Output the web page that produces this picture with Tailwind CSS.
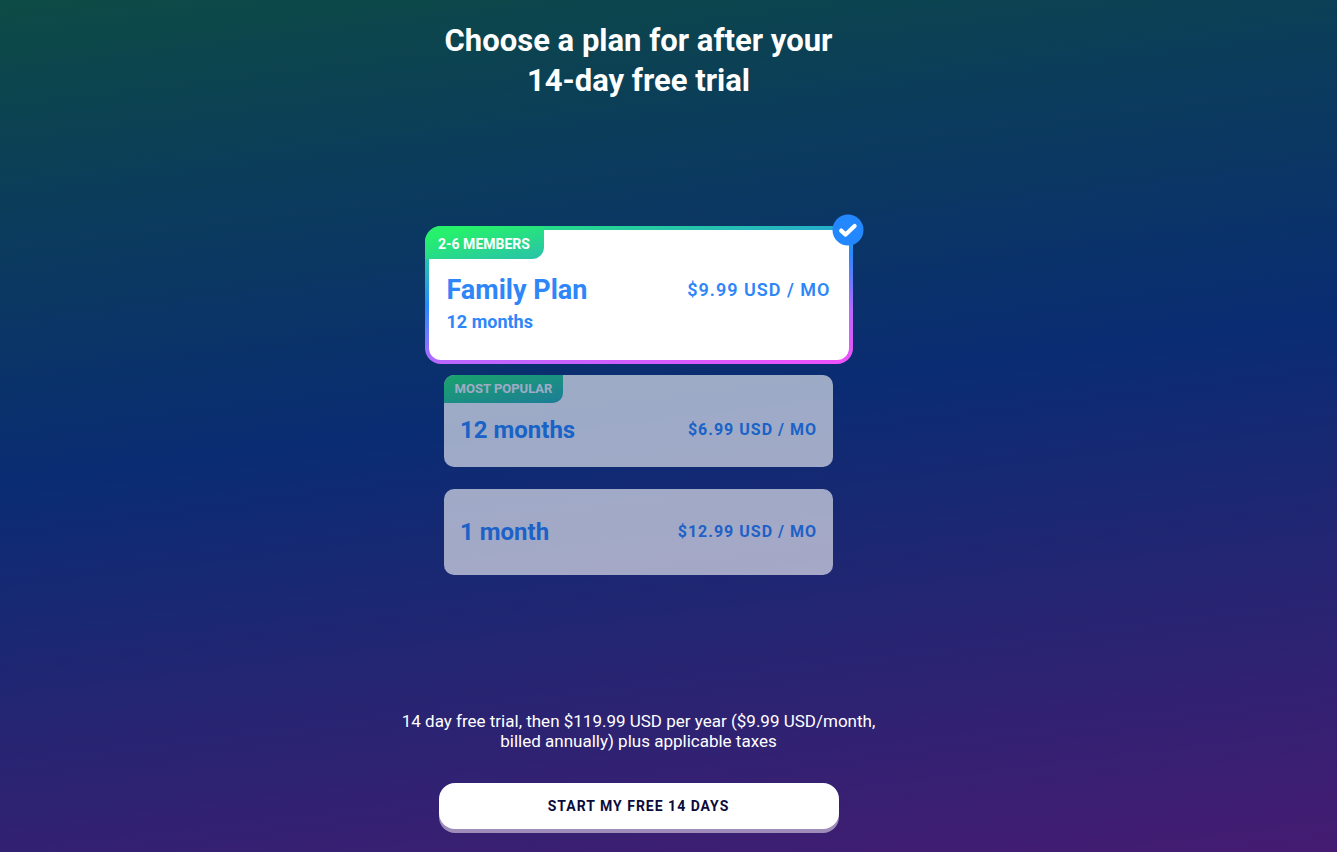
<!DOCTYPE html>
<html lang="en">
<head>
<meta charset="utf-8">
<meta name="viewport" content="width=device-width, initial-scale=1">
<title>Choose a plan</title>
<script src="https://cdn.jsdelivr.net/npm/@tailwindcss/browser@4"></script>
</head>
<body class="min-h-screen bg-[linear-gradient(173deg,#0d4b45_0%,#0b3d5a_20%,#0a2c73_48%,#451c72_100%)] font-['Roboto',sans-serif] text-white">
<form class="flex min-h-screen flex-col items-center px-4 pt-[21px] pb-[23px] md:pr-[60px] md:pl-0">
  <h1 class="max-w-[420px] text-center text-[31px] leading-10 font-bold">Choose a plan for after your<br>14-day free trial</h1>

  <div role="radiogroup" aria-label="Plan" class="mt-[125px] flex w-full max-w-[428px] flex-col items-center">
    <label class="relative w-full cursor-pointer rounded-2xl bg-[linear-gradient(173deg,#26f06c_0%,#2689ff_42%,#b868ff_72%,#f050fa_100%)] p-1">
      <input type="radio" name="plan" value="family" checked class="sr-only">
      <span class="flex h-[130px] items-start justify-between rounded-xl bg-white px-[18px] pt-11 text-[#2e86f8]">
        <span class="flex flex-col">
          <span class="text-[27px] leading-8 font-bold">Family Plan</span>
          <span class="text-lg leading-8 font-bold">12 months</span>
        </span>
        <span class="text-lg leading-8 font-semibold tracking-[1px]">$9.99 USD / MO</span>
      </span>
      <span class="absolute top-0 left-0 flex h-[33px] w-[119px] items-center justify-center rounded-tl-2xl rounded-br-xl bg-[linear-gradient(168deg,#26f06c_20%,#29c1ab_100%)] pt-[3px] text-sm font-bold">2-6 MEMBERS</span>
      <svg class="absolute -top-3 -right-[11px] size-8" viewBox="0 0 32 32" fill="none" aria-hidden="true">
        <circle cx="16" cy="16" r="15.5" fill="#2388ff"/>
        <path d="M9.2 16.6 L13.6 20.6 L22.6 12" stroke="#fff" stroke-width="4.2" stroke-linecap="round" stroke-linejoin="round"/>
      </svg>
    </label>

    <label class="relative mt-[11px] flex h-[92px] w-full max-w-[389px] cursor-pointer items-center justify-between rounded-[10px] bg-white px-4 pt-[18px] text-[#2388ff] opacity-60">
      <input type="radio" name="plan" value="annual" class="sr-only">
      <span class="absolute top-0 left-0 flex h-7 w-[119px] items-center justify-center rounded-tl-[10px] rounded-br-[10px] bg-[linear-gradient(168deg,#26f06c_0%,#29b2b0_100%)] text-[13px] font-bold text-white">MOST POPULAR</span>
      <span class="text-2xl font-bold">12 months</span>
      <span class="text-base font-bold tracking-[1px]">$6.99 USD / MO</span>
    </label>

    <label class="mt-[22px] flex h-[86px] w-full max-w-[389px] cursor-pointer items-center justify-between rounded-[10px] bg-white px-4 text-[#2388ff] opacity-60">
      <input type="radio" name="plan" value="monthly" class="sr-only">
      <span class="text-2xl font-bold">1 month</span>
      <span class="text-base font-bold tracking-[1px]">$12.99 USD / MO</span>
    </label>
  </div>

  <p class="mt-auto text-center text-[17px] leading-5">14 day free trial, then $119.99 USD per year ($9.99 USD/month,<br>billed annually) plus applicable taxes</p>
  <button type="submit" class="mt-8 h-[46px] w-full max-w-[400px] cursor-pointer rounded-2xl bg-white text-sm font-bold tracking-[1px] text-[#0b0b3b] shadow-[0_4px_0_#9d8db8]">START MY FREE 14 DAYS</button>
</form>
</body>
</html>
